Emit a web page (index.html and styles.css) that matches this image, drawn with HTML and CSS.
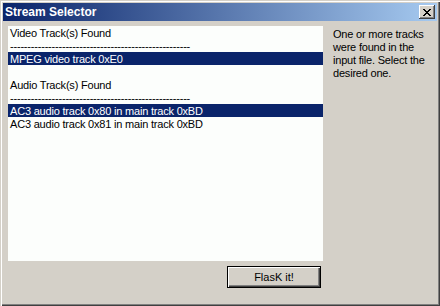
FILE: index.html
```html
<!DOCTYPE html>
<html lang="en">
<head>
    <meta charset="UTF-8">
    <title>Stream Selector</title>
    <link rel="stylesheet" href="styles.css">
</head>
<body>
    <div class="window">
        <div class="titlebar">
            <span class="title">Stream Selector</span>
            <button class="close-btn" aria-label="Close">
                <svg width="8" height="7" viewBox="0 0 8 7">
                    <path d="M0 0h2v1h1v1h2v-1h1v-1h2v1h-1v1h-1v1h-1v1h1v1h1v1h1v1h-2v-1h-1v-1h-2v1h-1v1h-2v-1h1v-1h1v-1h1v-1h-1v-1h-1v-1h-1z" fill="#000"/>
                </svg>
            </button>
        </div>

        <div class="content">
            <div class="main-row">
                <!-- Track list -->
                <ul class="track-list">
                    <li>Video Track(s) Found</li>
                    <li>----------------------------------------------------</li>
                    <li class="selected">MPEG video track 0xE0</li>
                    <li>&nbsp;</li>
                    <li>Audio Track(s) Found</li>
                    <li>----------------------------------------------------</li>
                    <li class="selected">AC3 audio track 0x80 in main track 0xBD</li>
                    <li>AC3 audio track 0x81 in main track 0xBD</li>
                </ul>

                <p class="info">One or more tracks were found in the input file. Select the desired one.</p>
            </div>

            <div class="button-row">
                <button class="flask-btn">FlasK it!</button>
            </div>
        </div>
    </div>
</body>
</html>
```

FILE: styles.css
```css
html, body {
    margin: 0;
    padding: 0;
}
body {
    font-family: "Liberation Sans", Arial, sans-serif;
    font-size: 11px;
    background-color: #d4d0c8;
    color: #000;
}
.window {
    width: 440px;
    height: 306px;
    box-sizing: border-box;
    padding: 3px;
    background-color: #d4d0c8;
    /* classic raised frame */
    box-shadow: inset 1px 1px 0 #d4d0c8, inset 2px 2px 0 #ffffff,
                inset -1px -1px 0 #404040, inset -2px -2px 0 #808080;
}
.titlebar {
    height: 18px;
    display: flex;
    align-items: center;
    justify-content: space-between;
    padding: 0 2px 0 2px;
    background: linear-gradient(to right, #0a246a, #a6caf0);
}
.title {
    color: #ffffff;
    font-family: "Liberation Sans", Arial, sans-serif;
    font-weight: bold;
    font-size: 12px;
}
.close-btn {
    width: 16px;
    height: 14px;
    padding: 0;
    border: none;
    background-color: #d4d0c8;
    display: flex;
    align-items: center;
    justify-content: center;
    box-shadow: inset -1px -1px 0 #404040, inset 1px 1px 0 #ffffff,
                inset -2px -2px 0 #808080, inset 2px 2px 0 #d4d0c8;
}
.close-btn svg {
    display: block;
    margin-left: -1px;
}
.content {
    padding: 5px 0 0 5px;
}
.main-row {
    display: flex;
}
.track-list {
    list-style-type: none;
    margin: 0;
    padding: 0;
    width: 315px;
    height: 235px;
    background-color: #fcfefc;
    letter-spacing: -0.2px;
}
.track-list li {
    height: 12px;
    padding: 1px 0 0 2px;
    line-height: 13px;
    white-space: nowrap;
}
.track-list li.selected {
    background-color: #0a246a;
    color: #ffffff;
}
.info {
    margin: 2px 0 0 10px;
    width: 96px;
    line-height: 13px;
    letter-spacing: -0.2px;
}
.button-row {
    width: 313px;
    display: flex;
    justify-content: flex-end;
    margin-top: 5px;
}
.flask-btn {
    width: 94px;
    height: 22px;
    padding: 0;
    font-family: "Liberation Sans", Arial, sans-serif;
    font-size: 11px;
    color: #000;
    background-color: #d4d0c8;
    border: 1px solid #000;
    box-shadow: inset 1px 1px 0 #ffffff, inset -1px -1px 0 #404040,
                inset -2px -2px 0 #808080;
    cursor: pointer;
}
```
